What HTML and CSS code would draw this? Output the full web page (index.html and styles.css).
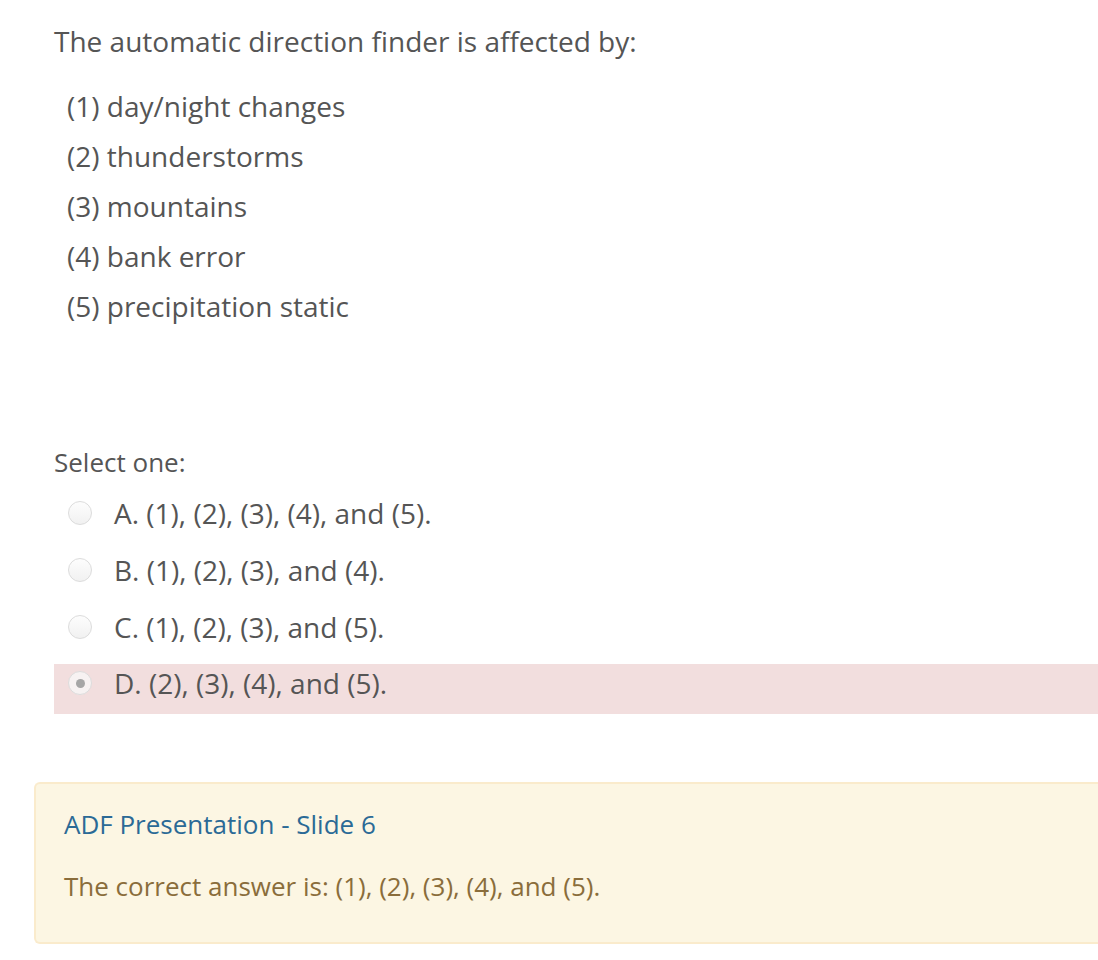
FILE: index.html
```html
<!DOCTYPE html>
<html>
<head>
<meta charset="utf-8">
<link rel="stylesheet" href="styles.css">
</head>
<body>
<div class="question">
  <div class="qtext">
    <p class="stem">The automatic direction finder is affected by:</p>
    <ul class="items">
      <li>(1) day/night changes</li>
      <li>(2) thunderstorms</li>
      <li>(3) mountains</li>
      <li>(4) bank error</li>
      <li>(5) precipitation static</li>
    </ul>
  </div>
  <div class="ablock">
    <div class="prompt">Select one:</div>
    <div class="answers">
      <div class="opt"><span class="radio"></span><span class="label">A. (1), (2), (3), (4), and (5).</span></div>
      <div class="opt"><span class="radio"></span><span class="label">B. (1), (2), (3), and (4).</span></div>
      <div class="opt"><span class="radio"></span><span class="label">C. (1), (2), (3), and (5).</span></div>
      <div class="opt incorrect"><span class="radio checked"></span><span class="label">D. (2), (3), (4), and (5).</span></div>
    </div>
  </div>
  <div class="feedback">
    <a class="fb-link" href="#">ADF Presentation - Slide 6</a>
    <div class="rightanswer">The correct answer is: (1), (2), (3), (4), and (5).</div>
  </div>
</div>
</body>
</html>
```

FILE: styles.css
```css
html, body {
  margin: 0;
  padding: 0;
  background: #fff;
}
body {
  font-family: "Open Sans", "Liberation Sans", sans-serif;
  font-size: 28px;
  color: #555;
  overflow: hidden;
}
.question {
  padding: 21px 0 0 34px;
}
.qtext {
  padding-left: 20px;
}
.stem {
  margin: 0;
  line-height: 40px;
}
.items {
  list-style: none;
  margin: 20px 0 0 0;
  padding: 0 0 0 13px;
}
.items li {
  line-height: 50px;
}
.ablock {
  margin-top: 111px;
  padding-left: 20px;
}
.prompt {
  font-size: 26px;
  line-height: 40px;
}
.answers {
  margin-top: 6px;
}
.opt {
  display: flex;
  align-items: center;
  height: 50px;
  margin-bottom: 7px;
  padding-left: 14px;
  box-sizing: border-box;
}
.opt.incorrect {
  background: #f2dede;
  margin-top: 12px;
  padding-bottom: 12px;
}
.radio {
  width: 24px;
  height: 24px;
  border-radius: 50%;
  border: 1px solid #dcdcdc;
  background: linear-gradient(#fdfdfd, #f1f1f1);
  box-sizing: border-box;
  margin-right: 22px;
  display: flex;
  align-items: center;
  justify-content: center;
  flex: none;
}
.radio.checked {
  background: #f7f2f2;
}
.radio.checked::after {
  content: "";
  width: 9px;
  height: 9px;
  border-radius: 50%;
  background: #a6a6a6;
}
.label {
  line-height: 40px;
}
.feedback {
  margin-top: 68px;
  background: #fcf6e3;
  border: 2px solid #faebcc;
  border-right: none;
  border-radius: 6px 0 0 6px;
  padding: 20px 28px 36px 28px;
  font-size: 26px;
}
.fb-link {
  display: block;
  color: #2b6a96;
  text-decoration: none;
  line-height: 40px;
}
.rightanswer {
  color: #8a6d3b;
  margin-top: 22px;
  line-height: 40px;
}
```
